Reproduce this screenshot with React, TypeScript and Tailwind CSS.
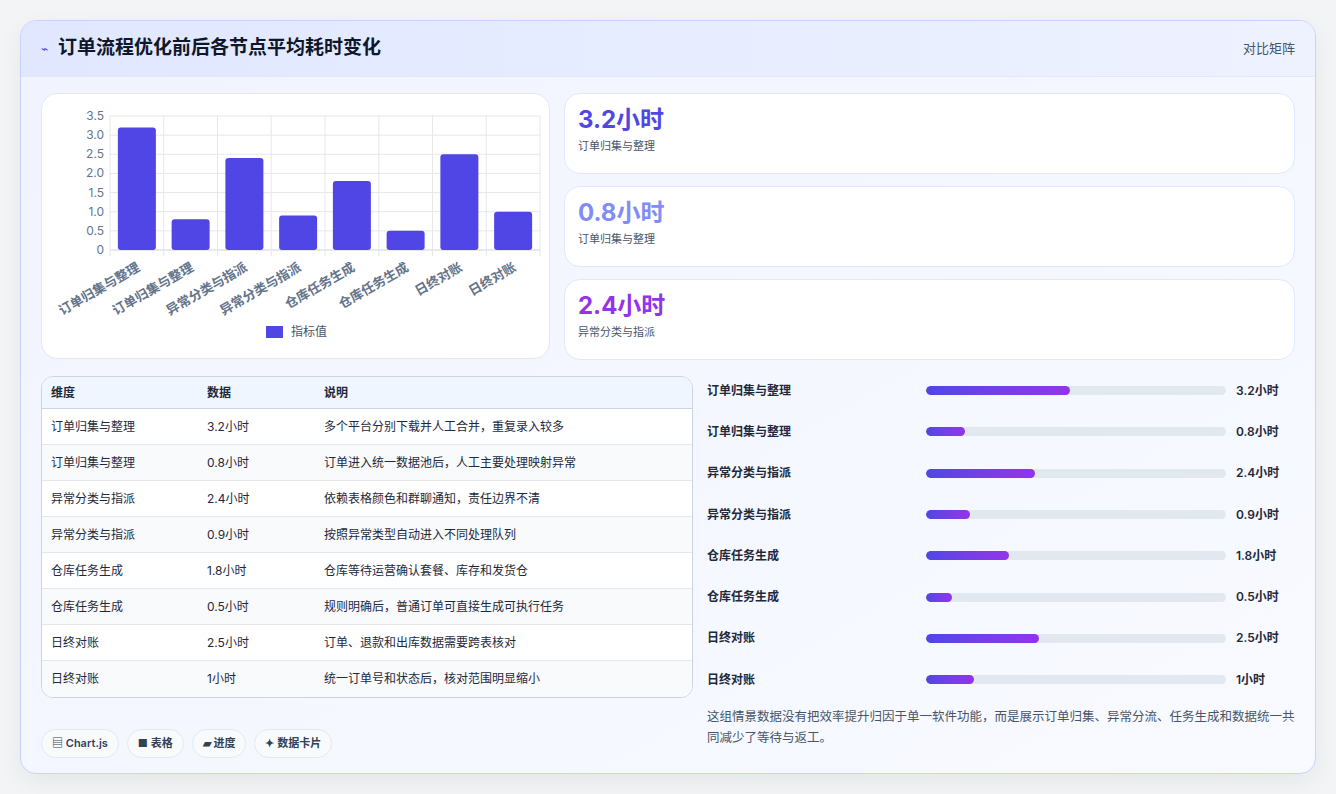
import React from "react";

const data = [
  ["订单归集与整理", 3.2, "多个平台分别下载并人工合并，重复录入较多"],
  ["订单归集与整理", 0.8, "订单进入统一数据池后，人工主要处理映射异常"],
  ["异常分类与指派", 2.4, "依赖表格颜色和群聊通知，责任边界不清"],
  ["异常分类与指派", 0.9, "按照异常类型自动进入不同处理队列"],
  ["仓库任务生成", 1.8, "仓库等待运营确认套餐、库存和发货仓"],
  ["仓库任务生成", 0.5, "规则明确后，普通订单可直接生成可执行任务"],
  ["日终对账", 2.5, "订单、退款和出库数据需要跨表核对"],
  ["日终对账", 1, "统一订单号和状态后，核对范围明显缩小"],
] as const;

function Chart() {
  const x0 = 68, x1 = 498, y0 = 156, yT = 22;
  const cw = (x1 - x0) / 8;
  const yv = (v: number) => y0 - (v / 3.5) * (y0 - yT);
  const ticks = [0, 0.5, 1, 1.5, 2, 2.5, 3, 3.5];
  return (
    <svg width="509" height="266" viewBox="0 0 509 266" style={{ fontFamily: "Inter, 'Noto Sans CJK SC', sans-serif" }}>
      {ticks.map((t) => (
        <g key={t}>
          <line x1={x0} x2={x1} y1={yv(t)} y2={yv(t)} stroke={t === 0 ? "#cbd5e1" : "#e5e7eb"} />
          <text x={x0 - 6} y={yv(t) + 4} fontSize="12" fill="#64748b" textAnchor="end">{t === 0 ? "0" : t.toFixed(1)}</text>
        </g>
      ))}
      {Array.from({ length: 9 }).map((_, i) => (
        <line key={i} x1={x0 + i * cw} x2={x0 + i * cw} y1={yT} y2={y0 + 6} stroke="#e5e7eb" />
      ))}
      {data.map((d, i) => {
        const cx = x0 + i * cw + cw / 2;
        return (
          <g key={i}>
            <rect x={cx - 19} y={yv(d[1])} width="38" height={y0 - yv(d[1])} rx="3" fill="#4f46e5" />
            <text x={cx + 4} y={y0 + 20} fontSize="13" fontWeight="700" fill="#64748b" textAnchor="end" transform={`rotate(-30 ${cx + 4} ${y0 + 20})`}>{d[0]}</text>
          </g>
        );
      })}
      <rect x="224" y="232" width="17" height="12" fill="#4f46e5" />
      <text x="249" y="242" fontSize="12" fill="#475569">指标值</text>
    </svg>
  );
}

export default function App() {
  const stats = [
    ["3.2小时", "订单归集与整理", "text-[#4f46e5]"],
    ["0.8小时", "订单归集与整理", "text-[#818cf8]"],
    ["2.4小时", "异常分类与指派", "text-[#9333ea]"],
  ];
  return (
    <div className="w-[1336px] h-[794px] bg-[#f3f4f6] p-5 pb-0" style={{ fontFamily: "Inter, 'Noto Sans CJK SC', sans-serif" }}>
      <div className="w-[1296px] h-[754px] rounded-2xl border border-[#c7d2fe] bg-gradient-to-br from-[#f1f4ff] to-[#f8faff] overflow-hidden shadow-[0_8px_24px_rgba(0,0,0,0.06)]">
        <div className="h-[56px] flex items-center justify-between px-5 bg-gradient-to-r from-[#e0e7ff] to-[#eef2ff] border-b border-[#e0e7ff]">
          <div className="flex items-center gap-2.5">
            <span className="text-[#4f46e5] text-xs">⌁</span>
            <span className="text-[19px] font-bold text-[#0f172a]">订单流程优化前后各节点平均耗时变化</span>
          </div>
          <span className="text-[13px] text-[#475569]">对比矩阵</span>
        </div>
        <div className="px-5 pt-4">
          <div className="flex gap-[14px]">
            <div className="w-[509px] h-[266px] bg-white rounded-2xl border border-[#e5e7eb]"><Chart /></div>
            <div className="flex-1 flex flex-col gap-3">
              {stats.map((s, i) => (
                <div key={i} className="h-[81px] bg-white rounded-2xl border border-[#e0e7ff] px-[13px] pt-[10px]">
                  <div className={`text-[24px] font-bold leading-[32px] ${s[2]}`}>{s[0]}</div>
                  <div className="text-[11px] text-[#475569] mt-0.5">{s[1]}</div>
                </div>
              ))}
            </div>
          </div>
          <div className="flex gap-[14px] mt-4">
            <div className="w-[652px]">
              <div className="rounded-xl border border-[#cbd5e1] overflow-hidden bg-white">
                <div className="flex h-[32px] items-center bg-[#eff6ff] text-[12px] font-semibold text-[#1e293b] border-b border-[#cbd5e1]">
                  <div className="w-[156px] pl-[9px]">维度</div>
                  <div className="w-[117px] pl-[9px]">数据</div>
                  <div className="flex-1 pl-[9px]">说明</div>
                </div>
                {data.map((d, i) => (
                  <div key={i} className={`flex h-[36px] items-center text-[12px] text-[#1e293b] ${i < 7 ? "border-b border-[#e5e7eb]" : ""} ${i % 2 ? "bg-[#f8fafc]" : "bg-white"}`}>
                    <div className="w-[156px] pl-[9px]">{d[0]}</div>
                    <div className="w-[117px] pl-[9px]">{d[1]}小时</div>
                    <div className="flex-1 pl-[9px]">{d[2]}</div>
                  </div>
                ))}
              </div>
              <div className="flex gap-2 mt-[31px] text-[11px] font-semibold text-[#334155]">
                {["▤ Chart.js", "■ 表格", "▰ 进度", "✦ 数据卡片"].map((p) => (
                  <span key={p} className="h-[29px] px-2.5 flex items-center rounded-full border border-[#e2e8f0] bg-[#f8fafc]">{p}</span>
                ))}
              </div>
            </div>
            <div className="flex-1 -mt-[6px]">
              {data.map((d, i) => (
                <div key={i} className="flex items-center h-[41.3px] text-[12px] font-semibold text-[#1e293b]">
                  <div className="w-[219px]">{d[0]}</div>
                  <div className="w-[300px] h-[9px] rounded-full bg-[#e2e8f0] overflow-hidden">
                    <div className="h-full rounded-full bg-gradient-to-r from-[#4f46e5] to-[#9333ea]" style={{ width: `${(d[1] / 6.9) * 100 + 1.5}%` }} />
                  </div>
                  <div className="ml-[10px]">{d[1]}小时</div>
                </div>
              ))}
              <p className="mt-[6px] w-[588px] text-[12.5px] leading-[21px] text-[#475569]">这组情景数据没有把效率提升归因于单一软件功能，而是展示订单归集、异常分流、任务生成和数据统一共同减少了等待与返工。</p>
            </div>
          </div>
        </div>
      </div>
    </div>
  );
}
